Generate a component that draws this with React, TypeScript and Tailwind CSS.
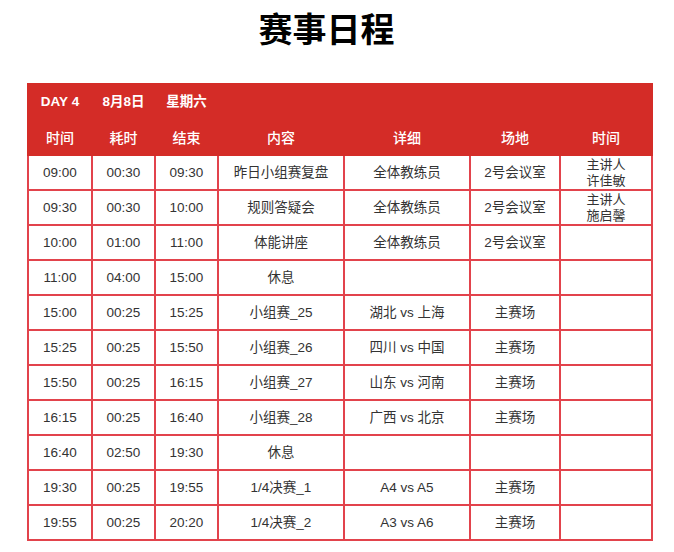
const rows: [string, string, string, string, string, string, string[]][] = [
  ['09:00', '00:30', '09:30', '昨日小组赛复盘', '全体教练员', '2号会议室', ['主讲人', '许佳敏']],
  ['09:30', '00:30', '10:00', '规则答疑会', '全体教练员', '2号会议室', ['主讲人', '施启馨']],
  ['10:00', '01:00', '11:00', '体能讲座', '全体教练员', '2号会议室', []],
  ['11:00', '04:00', '15:00', '休息', '', '', []],
  ['15:00', '00:25', '15:25', '小组赛_25', '湖北 vs 上海', '主赛场', []],
  ['15:25', '00:25', '15:50', '小组赛_26', '四川 vs 中国', '主赛场', []],
  ['15:50', '00:25', '16:15', '小组赛_27', '山东 vs 河南', '主赛场', []],
  ['16:15', '00:25', '16:40', '小组赛_28', '广西 vs 北京', '主赛场', []],
  ['16:40', '02:50', '19:30', '休息', '', '', []],
  ['19:30', '00:25', '19:55', '1/4决赛_1', 'A4 vs A5', '主赛场', []],
  ['19:55', '00:25', '20:20', '1/4决赛_2', 'A3 vs A6', '主赛场', []],
]

const headers = ['时间', '耗时', '结束', '内容', '详细', '场地', '时间']

export default function App() {
  return (
    <div className="w-[674px] h-[552px] bg-white overflow-hidden font-['Liberation_Sans','Noto_Sans_CJK_SC',sans-serif]">
      <h1 className="pt-[10px] pr-[21px] text-center text-[34px] leading-[40px] font-bold text-black">赛事日程</h1>

      <div className="ml-[27px] mt-[33px] w-[624px]">
        <table className="w-[624px] table-fixed border-collapse text-center">
          <colgroup>
            <col className="w-[64px]" />
            <col className="w-[63px]" />
            <col className="w-[63px]" />
            <col className="w-[126px]" />
            <col className="w-[126px]" />
            <col className="w-[90px]" />
            <col className="w-[92px]" />
          </colgroup>
          <thead className="bg-[#d42c27] text-white">
            <tr className="h-[36px] text-[13.5px] font-bold">
              <td className="border-2 border-[#d42c27] pt-[1px]">DAY 4</td>
              <td className="border-2 border-[#d42c27] pt-[1px]">8月8日</td>
              <td className="border-2 border-[#d42c27] pt-[1px]">星期六</td>
              <td className="border-2 border-[#d42c27]" colSpan={4}></td>
            </tr>
            <tr className="h-[35px] text-[14px] font-medium">
              {headers.map((h, i) => (
                <td key={i} className="border-2 border-[#d42c27] pt-[2px]">
                  {h}
                </td>
              ))}
            </tr>
          </thead>
          <tbody className="text-[13.5px] text-[#333333]">
            {rows.map((r, i) => (
              <tr key={i} className="h-[35px]">
                {r.slice(0, 6).map((c, j) => (
                  <td key={j} className="border-2 border-[#e2434c] p-0 pt-[1px]">
                    {c as string}
                  </td>
                ))}
                <td className="border-2 border-[#e2434c] p-0 text-[13px] leading-[16px]">
                  {(r[6] as string[]).map((l, k) => (
                    <div key={k}>{l}</div>
                  ))}
                </td>
              </tr>
            ))}
          </tbody>
        </table>
      </div>
    </div>
  )
}
